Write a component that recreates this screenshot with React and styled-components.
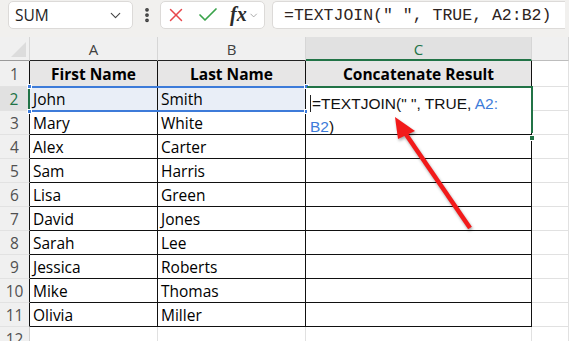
import React from 'react'
import styled, { createGlobalStyle } from 'styled-components'
import { ChevronDown, X, Check, EllipsisVertical } from 'lucide-react'

const GlobalStyle = createGlobalStyle`
  html, body {
    margin: 0;
    padding: 0;
    background: #ffffff;
  }
  * {
    box-sizing: border-box;
  }
`

const green = '#217346'
const blue = '#3d7bd9'
const cellFont = `'Open Sans', 'Noto Sans', sans-serif`

const Page = styled.div`
  position: relative;
  width: 569px;
  height: 341px;
  overflow: hidden;
  background: #ffffff;
`

const Toolbar = styled.div`
  display: flex;
  align-items: flex-start;
  height: 37px;
  padding: 1px 4px 0 8px;
  background: #f1f0ee;
`

const Box = styled.div`
  display: flex;
  align-items: center;
  height: 28px;
  background: #ffffff;
  border: 1px solid #dcdad8;
  border-radius: 5px;
`

const NameBox = styled(Box)`
  width: 125px;
  padding: 0 8px 0 6px;
  justify-content: space-between;
  font-family: 'Open Sans', 'Noto Sans', sans-serif;
  font-size: 15.5px;
  color: #222;
`

const Dots = styled.div`
  display: flex;
  align-items: center;
  justify-content: center;
  width: 27px;
  height: 28px;
  color: #3a3a3a;
`

const FxBox = styled(Box)`
  width: 105px;
  padding: 0 5px 0 4px;
`

const FxIcon = styled.span`
  display: flex;
  align-items: center;
  margin-right: ${(p) => p.$gap || 0}px;
`

const FxLabel = styled.span`
  font-family: 'Liberation Serif', serif;
  font-style: italic;
  font-weight: bold;
  font-size: 20px;
  color: #2b2b2b;
  margin: 0 1px 2px 0;
`

const FormulaBox = styled(Box)`
  flex: 1;
  margin-left: 7px;
  padding-left: 11px;
  border-radius: 5px 0 0 5px;
  border-right: none;
  font-family: 'Liberation Mono', monospace;
  font-size: 16.5px;
  color: #2e2421;
  white-space: nowrap;
`

const Sheet = styled.div`
  position: relative;
  display: grid;
  grid-template-columns: 30px 128px 148px 226px 1fr;
  grid-template-rows: 24px 26px repeat(11, 24px);
  font-family: ${cellFont};
`

const Corner = styled.div`
  position: relative;
  background: #f0f0f0;
  border-right: 1px solid #d6d6d6;
  border-bottom: 1px solid #9a9a9a;

  &::after {
    content: '';
    position: absolute;
    right: 3px;
    bottom: 3px;
    width: 15px;
    height: 15px;
    background: #dcdcdc;
    clip-path: polygon(100% 0, 100% 100%, 0 100%);
  }
`

const ColHead = styled.div`
  display: flex;
  align-items: center;
  justify-content: center;
  background: ${(p) => (p.$active ? '#e1e1e1' : '#f0f0f0')};
  color: ${(p) => (p.$active ? green : '#404040')};
  border-right: 1px solid #d6d6d6;
  border-bottom: ${(p) =>
    p.$active ? `2px solid ${green}` : p.$table ? '1px solid #222' : '1px solid #bdbdbd'};
  font-size: 15px;
  padding-top: 1px;
`

const RowHead = styled.div`
  display: flex;
  align-items: center;
  justify-content: center;
  background: ${(p) => (p.$active ? '#e1e1e1' : '#f0f0f0')};
  color: ${(p) => (p.$active ? green : '#505050')};
  border-bottom: 1px solid #e2e2e2;
  border-right: ${(p) =>
    p.$active ? `2px solid ${green}` : p.$table ? '1px solid #111' : '1px solid #d0d0d0'};
  font-size: 15.5px;
`

const Cell = styled.div`
  display: flex;
  align-items: center;
  justify-content: ${(p) => (p.$head ? 'center' : 'flex-start')};
  padding: 0 3px;
  background: ${(p) => (p.$head ? '#e7e6e6' : p.$range ? '#e9eef7' : '#ffffff')};
  border-right: 1px solid ${(p) => (p.$table ? '#111' : '#e1e1e1')};
  border-bottom: 1px solid ${(p) => (p.$table ? '#111' : '#e1e1e1')};
  font-size: 15.5px;
  font-weight: ${(p) => (p.$head ? 700 : 400)};
  color: #000;
  white-space: nowrap;
`

const RangeBox = styled.div`
  position: absolute;
  left: 30px;
  top: 49px;
  width: 276px;
  height: 26px;
  border-top: 2px solid ${blue};
  border-bottom: 2px solid ${blue};
  pointer-events: none;
`

const Handle = styled.span`
  position: absolute;
  width: 5px;
  height: 5px;
  background: ${blue};
  border: 1px solid #ffffff;
  ${(p) => (p.$right ? 'right: -3px;' : 'left: -3px;')}
  ${(p) => (p.$bottom ? 'bottom: -4px;' : 'top: -4px;')}
`

const EditBox = styled.div`
  position: absolute;
  left: 307px;
  top: 49px;
  width: 226px;
  height: 47px;
  padding: 4px 0 0 3px;
  background: #ffffff;
  border-top: 2px solid ${green};
  border-right: 2px solid ${green};
  font-family: 'Liberation Sans', Arial, sans-serif;
  font-size: 15.5px;
  line-height: 23px;
  color: #111;
  white-space: nowrap;
`

const Caret = styled.span`
  display: inline-block;
  width: 1px;
  height: 17px;
  margin-right: 1px;
  vertical-align: -3px;
  background: #222;
`

const Ref = styled.span`
  color: ${blue};
`

const FillHandle = styled.span`
  position: absolute;
  right: -4px;
  bottom: -8px;
  width: 6px;
  height: 6px;
  background: ${green};
  border: 1px solid #ffffff;
`

const Arrow = styled.svg`
  position: absolute;
  left: 0;
  top: 0;
  pointer-events: none;
  filter: drop-shadow(1px 2px 1.5px rgba(0, 0, 0, 0.35));
`

const people = [
  ['John', 'Smith'],
  ['Mary', 'White'],
  ['Alex', 'Carter'],
  ['Sam', 'Harris'],
  ['Lisa', 'Green'],
  ['David', 'Jones'],
  ['Sarah', 'Lee'],
  ['Jessica', 'Roberts'],
  ['Mike', 'Thomas'],
  ['Olivia', 'Miller'],
]

export default function App() {
  return (
    <Page>
      <GlobalStyle />
      <Toolbar>
        <NameBox>
          <span>SUM</span>
          <ChevronDown size={17} strokeWidth={1.6} color="#444" />
        </NameBox>
        <Dots>
          <EllipsisVertical size={18} strokeWidth={3} />
        </Dots>
        <FxBox>
          <FxIcon $gap={9}>
            <X size={22} strokeWidth={1.6} color="#e8474c" />
          </FxIcon>
          <FxIcon $gap={10}>
            <Check size={24} strokeWidth={1.7} color="#3aa34b" />
          </FxIcon>
          <FxLabel>fx</FxLabel>
          <ChevronDown size={15} strokeWidth={1.5} color="#8a8a8a" />
        </FxBox>
        <FormulaBox>=TEXTJOIN(" ", TRUE, A2:B2)</FormulaBox>
      </Toolbar>

      <Sheet>
        <Corner />
        <ColHead $table>A</ColHead>
        <ColHead $table>B</ColHead>
        <ColHead $active>C</ColHead>
        <ColHead />

        <RowHead $table>1</RowHead>
        <Cell $table $head>First Name</Cell>
        <Cell $table $head>Last Name</Cell>
        <Cell $table $head>Concatenate Result</Cell>
        <Cell />

        {people.map(([first, last], i) => (
          <React.Fragment key={first}>
            <RowHead $table $active={i === 0}>{i + 2}</RowHead>
            <Cell $table $range={i === 0}>{first}</Cell>
            <Cell $table $range={i === 0}>{last}</Cell>
            <Cell $table />
            <Cell />
          </React.Fragment>
        ))}

        <RowHead>12</RowHead>
        <Cell />
        <Cell />
        <Cell />
        <Cell />

        <RangeBox>
          <Handle />
          <Handle $right />
          <Handle $bottom />
          <Handle $right $bottom />
        </RangeBox>

        <EditBox>
          <Caret />
          =TEXTJOIN(" ", TRUE, <Ref>A2:</Ref>
          <br />
          <Ref>B2</Ref>)
          <FillHandle />
        </EditBox>
      </Sheet>

      <Arrow width="569" height="341" viewBox="0 0 569 341">
        <line x1="470" y1="228" x2="403" y2="130" stroke="#f21a1a" strokeWidth="4.5" />
        <polygon points="395,117 415,131 398,139" fill="#f21a1a" />
      </Arrow>
    </Page>
  )
}
